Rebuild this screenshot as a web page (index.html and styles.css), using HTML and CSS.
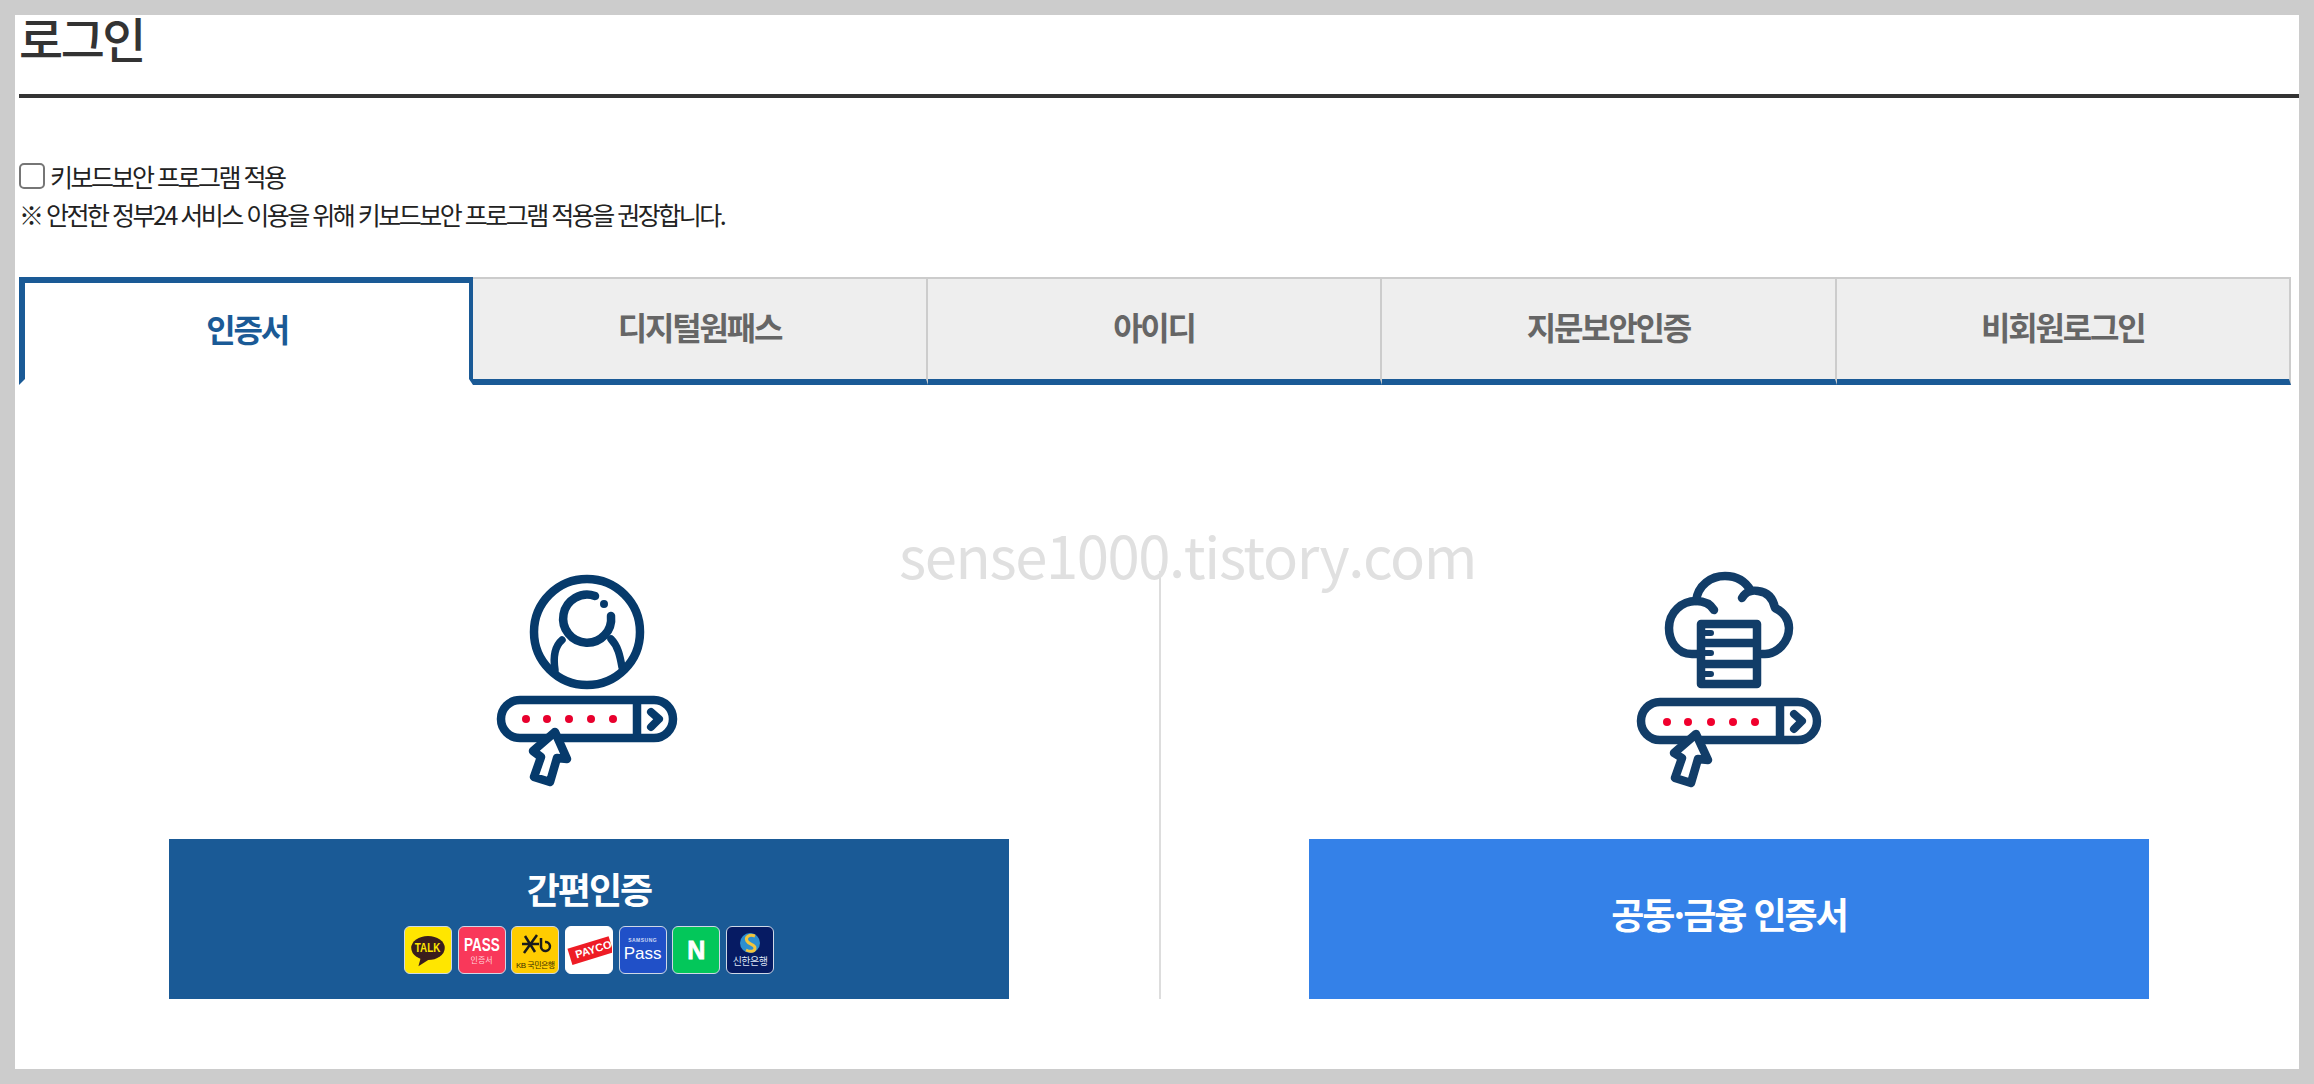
FILE: index.html
```html
<!DOCTYPE html>
<html lang="ko">
<head>
    <meta charset="UTF-8">
    <title>로그인</title>
    <link rel="stylesheet" href="styles.css">
</head>
<body>
    <div class="page">
        <h1 class="title">로그인</h1>

        <div class="keyboard">
            <label class="keyboard-check"><input type="checkbox"> 키보드보안 프로그램 적용</label>
            <p>※ 안전한 정부24 서비스 이용을 위해 키보드보안 프로그램 적용을 권장합니다.</p>
        </div>

        <ul class="tabs">
            <li class="tab active">인증서</li>
            <li class="tab">디지털원패스</li>
            <li class="tab">아이디</li>
            <li class="tab">지문보안인증</li>
            <li class="tab">비회원로그인</li>
        </ul>

        <div class="methods">
            <div class="watermark">sense1000.tistory.com</div>

            <div class="method">
                <svg class="method-icon" viewBox="-1 0 240 240" fill="none" stroke="#063a6b" stroke-width="8.500" stroke-linecap="round" stroke-linejoin="round">
                    <circle cx="117" cy="72" r="53"/>
                    <path d="M125 36A24 24 0 1 0 141 56"/>
                    <circle cx="134" cy="44" r="3" fill="#063a6b" stroke-width="2"/>
                    <path d="M92 80C84 87 83 97 85 110M141 79C148 86 150 96 152 107" stroke-width="7.500"/>
                    <path d="M50 140h134a19 19 0 0 1 0 38H50a19 19 0 0 1 0-38zM167 140v38"/>
                    <path d="M181 152l8 7-8 8" stroke-width="8"/>
                    <path d="M85 172l-22 19 8 6-7 20 16 5 7-24 10 1z" fill="#fff"/>
                    <g fill="#e8002d" stroke="none">
                        <circle cx="56" cy="159" r="4"/>
                        <circle cx="77" cy="159" r="4"/>
                        <circle cx="99" cy="159" r="4"/>
                        <circle cx="121" cy="159" r="4"/>
                        <circle cx="143" cy="159" r="4"/>
                    </g>
                </svg>
                <a class="method-btn simple">
                    <strong>간편인증</strong>
                    <span class="apps">
                        <span class="app kakao"><svg viewBox="0 0 48 48"><ellipse cx="24" cy="22" rx="17.5" ry="12.5" fill="#3a1d1d"/><path d="M17 30l-3 11 11-7z" fill="#3a1d1d"/></svg><b>TALK</b></span>
                        <span class="app pass"><b>PASS</b><i>인증서</i></span>
                        <span class="app kb"><svg viewBox="0 0 46 30" fill="none" stroke="#1b1b1b" stroke-width="2.500"><path d="M10 13h17M13 5l10 16M25 4L12 22M29 7v9a4.500 4.500 0 1 0 4-5"/></svg><i>KB 국민은행</i></span>
                        <span class="app payco"><b>PAYCO</b></span>
                        <span class="app samsung"><i>SAMSUNG</i><b>Pass</b></span>
                        <span class="app naver"><b>N</b></span>
                        <span class="app shinhan"><svg viewBox="0 0 46 24"><circle cx="23" cy="12" r="10" fill="#2d8fd0"/><path d="M28 5c-6-2-10 1-8 5s8 3 8 7-5 4-9 2" fill="none" stroke="#f3c53c" stroke-width="3"/></svg><i>신한은행</i></span>
                    </span>
                </a>
            </div>

            <div class="method">
                <svg class="method-icon" viewBox="-1 0 240 240" fill="none" stroke="#123d68" stroke-width="8.500" stroke-linecap="round" stroke-linejoin="round">
                    <path d="M87 94H82C66 94 59 80 59 68C59 52 72 41 86 41C96 41 101 45 104 50"/>
                    <path d="M86 41C88 25 101 16 115 16C127 16 136 22 141 31"/>
                    <path d="M132 38C136 31 143 30 148 31C157 32 163 38 165 48C174 52 179 60 179 68C179 82 167 94 155 94H152"/>
                    <path d="M91 64h56v60H91zM91 83h56M91 104h56" fill="#fff"/>
                    <path d="M92 73h9M92 93h9M92 114h9" stroke-width="6"/>
                    <path d="M50 142h138a19 19 0 0 1 0 38H50a19 19 0 0 1 0-38zM170 142v38"/>
                    <path d="M184 154l8 7-8 8" stroke-width="8"/>
                    <path d="M86 174l-22 19 8 5-7 20 16 5 7-24 10 1z" fill="#fff"/>
                    <g fill="#f0002d" stroke="none">
                        <circle cx="57" cy="162" r="4"/>
                        <circle cx="78" cy="162" r="4"/>
                        <circle cx="101" cy="162" r="4"/>
                        <circle cx="123" cy="162" r="4"/>
                        <circle cx="145" cy="162" r="4"/>
                    </g>
                </svg>
                <a class="method-btn cert">
                    <strong>공동·금융 인증서</strong>
                </a>
            </div>
        </div>
    </div>
</body>
</html>
```

FILE: styles.css
```css
* {
    margin: 0;
    padding: 0;
    box-sizing: border-box;
}

body {
    background-color: white;
    color: #222;
    font-family: "Noto Sans CJK KR", "Noto Sans", sans-serif;
    border: 15px solid #ccc;
    height: 1084px;
    overflow: hidden;
}

.page {
    padding: 0 0 0 4px;
    margin-right: -1px;
}

.title {
    height: 83px;
    border-bottom: 4px solid #333;
    font-size: 48px;
    font-weight: 500;
    line-height: 44px;
    letter-spacing: -2.5px;
    color: #333;
}

.keyboard {
    margin-top: 60px;
    font-size: 25px;
    line-height: 40px;
    letter-spacing: -2.5px;
    height: 119px;
}

.keyboard-check {
    display: flex;
    align-items: center;
    gap: 5px;
    height: 36px;
}

.keyboard-check input {
    appearance: none;
    width: 26px;
    height: 26px;
    border: 2px solid #767676;
    border-radius: 5px;
    background-color: white;
}

.tabs {
    display: grid;
    grid-template-columns: repeat(5, 1fr);
    list-style: none;
    width: 2272px;
}

.tab {
    height: 108px;
    display: flex;
    align-items: center;
    justify-content: center;
    padding-bottom: 7px;
    background-color: #eee;
    border: 2px solid #ccc;
    border-left-width: 0;
    border-bottom: 6px solid #1a5a96;
    font-size: 32px;
    font-weight: 700;
    letter-spacing: -2.2px;
    color: #666;
}

.tab.active {
    background-color: white;
    border: 6px solid #1a5a96;
    border-right-width: 4px;
    border-bottom-color: white;
    color: #1a5a96;
}

.methods {
    position: relative;
    display: flex;
    margin-top: 175px;
    width: 2280px;
    height: 439px;
}

.watermark {
    position: absolute;
    left: 880px;
    top: -36px;
    font-size: 58px;
    font-weight: 400;
    line-height: 60px;
    letter-spacing: -1.4px;
    color: #e0e0e0;
}

.method {
    flex: 1;
    display: flex;
    flex-direction: column;
    align-items: center;
    justify-content: flex-end;
    gap: 39px;
}

.method + .method {
    background: linear-gradient(#ddd, #ddd) left 11px / 2px 428px no-repeat;
}

.method-icon {
    width: 240px;
    height: 240px;
    position: relative;
}

.method-btn {
    width: 840px;
    height: 160px;
    display: flex;
    flex-direction: column;
    align-items: center;
    justify-content: center;
    color: white;
}

.method-btn strong {
    font-size: 36px;
    font-weight: 700;
    letter-spacing: -2px;
    line-height: 50px;
}

.simple {
    background-color: #1a5a96;
    gap: 13px;
    justify-content: flex-start;
    padding-top: 24px;
}

.cert {
    background-color: #3481e8;
    padding-bottom: 12px;
}

.apps {
    display: flex;
    gap: 5.7px;
}

.app {
    position: relative;
    width: 48px;
    height: 48px;
    border: 1px solid #cfd8e6;
    border-radius: 6px;
    overflow: hidden;
    display: flex;
    flex-direction: column;
    align-items: center;
    justify-content: center;
    line-height: 1;
    font-family: "Liberation Sans", "Noto Sans CJK KR", sans-serif;
}

.app i {
    font-style: normal;
}

.app svg {
    display: block;
}

.kakao {
    background-color: #ffe600;
}

.kakao svg {
    position: absolute;
    inset: 0;
}

.kakao b {
    position: relative;
    font-size: 12px;
    color: #ffe600;
    margin-top: -4px;
    transform: scaleX(0.82);
}

.pass {
    background-color: #f9385a;
}

.pass b {
    font-size: 18px;
    transform: scaleX(0.75);
}

.pass i {
    font-size: 8px;
    margin-top: 3px;
    color: #ffd5dc;
}

.kb {
    background-color: #ffcc00;
    color: #3a2f00;
}

.kb svg {
    width: 46px;
    height: 30px;
}

.kb i {
    font-size: 8px;
    letter-spacing: -0.5px;
    margin-top: 1px;
}

.payco {
    background-color: white;
    border-color: white;
}

.payco b {
    align-self: flex-end;
    background-color: #ee1c25;
    color: white;
    font-size: 11px;
    padding: 3px 0 3px 6px;
    transform: rotate(-17deg);
}

.samsung {
    background-color: #2050c8;
}

.samsung i {
    font-size: 5px;
    font-weight: 700;
    letter-spacing: 0.5px;
    margin-bottom: 2px;
    color: #cdd8f5;
}

.samsung b {
    font-size: 17px;
    font-weight: 400;
}

.naver {
    background-color: #03c75a;
    color: white;
}

.naver b {
    font-size: 25px;
    -webkit-text-stroke: 0.8px white;
}

.shinhan {
    background-color: #061b63;
}

.shinhan svg {
    width: 46px;
    height: 24px;
    margin-top: -2px;
}

.shinhan i {
    font-size: 10px;
    letter-spacing: -0.5px;
    margin-top: 2px;
    color: #dfe6f5;
}
```
